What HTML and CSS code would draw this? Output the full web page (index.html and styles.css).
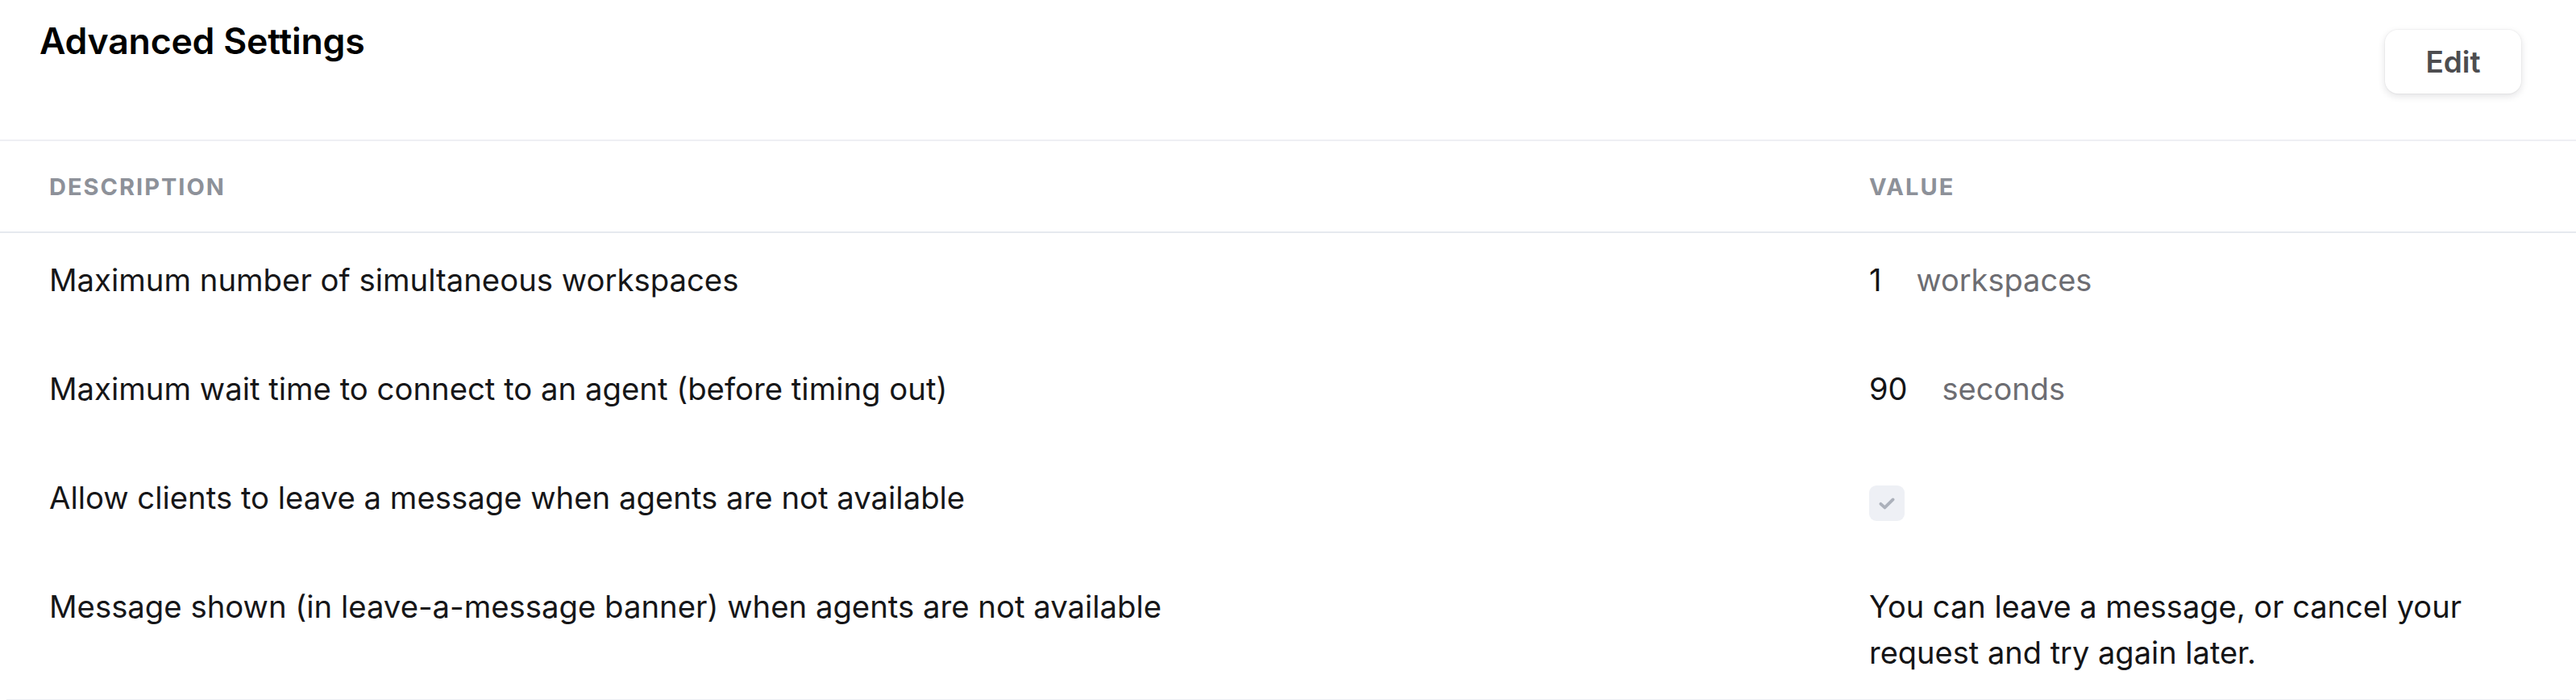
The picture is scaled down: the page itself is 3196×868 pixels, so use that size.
FILE: index.html
```html
<!DOCTYPE html>
<html lang="en">
<head>
<meta charset="utf-8">
<title>Advanced Settings</title>
<link rel="stylesheet" href="styles.css">
</head>
<body>
<section class="panel">
  <header class="panel-head">
    <h2 class="panel-title">Advanced Settings</h2>
    <button class="btn-edit" type="button">Edit</button>
  </header>
  <div class="settings">
    <div class="settings-row settings-headrow">
      <div class="col-label">Description</div>
      <div class="col-label">Value</div>
    </div>
    <div class="settings-row">
      <div class="cell-desc">Maximum number of simultaneous workspaces</div>
      <div class="cell-value"><span class="num">1</span><span class="unit">workspaces</span></div>
    </div>
    <div class="settings-row">
      <div class="cell-desc">Maximum wait time to connect to an agent (before timing out)</div>
      <div class="cell-value"><span class="num">90</span><span class="unit">seconds</span></div>
    </div>
    <div class="settings-row">
      <div class="cell-desc">Allow clients to leave a message when agents are not available</div>
      <div class="cell-value">
        <span class="checkbox" role="checkbox" aria-checked="true" aria-disabled="true">
          <svg viewBox="0 0 24 24" width="26" height="26"><path d="M5 12.8 L9.6 17 L19 7.8" fill="none" stroke="#acb1bb" stroke-width="3.6" stroke-linecap="round" stroke-linejoin="round"/></svg>
        </span>
      </div>
    </div>
    <div class="settings-row settings-lastrow">
      <div class="cell-desc">Message shown (in leave-a-message banner) when agents are not available</div>
      <div class="cell-value cell-text">You can leave a message, or cancel your request and try again later.</div>
    </div>
  </div>
</section>
</body>
</html>
```

FILE: styles.css
```css
* { box-sizing: border-box; }
html, body { margin: 0; padding: 0; background: #ffffff; }
body {
  font-family: Inter, "Noto Sans", "Liberation Sans", sans-serif;
  color: #1b1b1d;
  width: 3196px;
  height: 868px;
  overflow: hidden;
}
.panel {
  display: flex;
  flex-direction: column;
}
.panel-head {
  display: flex;
  justify-content: space-between;
  align-items: flex-start;
  height: 175px;
  padding: 0 68px 0 49px;
  border-bottom: 2px solid #eeeff4;
}
.panel-title {
  margin: 24px 0 0;
  font-size: 44.6px;
  line-height: 54px;
  font-weight: 600;
  color: #000;
  letter-spacing: -0.2px;
}
.btn-edit {
  margin-top: 37px;
  width: 169px;
  height: 79px;
  border: none;
  border-radius: 16px;
  background: #fff;
  box-shadow: 0 3px 10px rgba(20, 25, 40, 0.13), 0 0 0 1px rgba(20, 25, 40, 0.03);
  font-family: inherit;
  font-size: 37px;
  font-weight: 600;
  color: #4d4d50;
}
.settings {
  display: flex;
  flex-direction: column;
  margin: 0 8px;
  border-bottom: 3px solid #eceef3;
}
.settings-row {
  display: grid;
  grid-template-columns: 1fr 809px;
  column-gap: 40px;
  padding: 30px 60px 29px 53px;
  min-height: 135px;
}
.settings-headrow {
  min-height: 0;
  height: 114px;
  padding-top: 0;
  padding-bottom: 0;
  align-items: center;
  border-bottom: 2px solid #e6e9ef;
  margin: 0 -8px;
  padding-left: 61px;
  padding-right: 68px;
}
.col-label {
  font-size: 29px;
  font-weight: 700;
  text-transform: uppercase;
  letter-spacing: 2px;
  color: #8d9199;
}
.cell-desc {
  font-size: 38.3px;
  line-height: 57px;
  color: #161618;
}
.cell-value {
  font-size: 38px;
  line-height: 57px;
  display: flex;
  align-items: flex-start;
}
.num {
  color: #141416;
  margin-right: 43px;
}
.unit {
  color: #6d6d72;
}
.checkbox {
  margin-top: 13px;
  width: 44px;
  height: 44px;
  border-radius: 9px;
  background: #eef0f5;
  display: flex;
  align-items: center;
  justify-content: center;
}
.cell-text {
  display: block;
  color: #141416;
}
.settings-lastrow {
  min-height: 0;
}
```
